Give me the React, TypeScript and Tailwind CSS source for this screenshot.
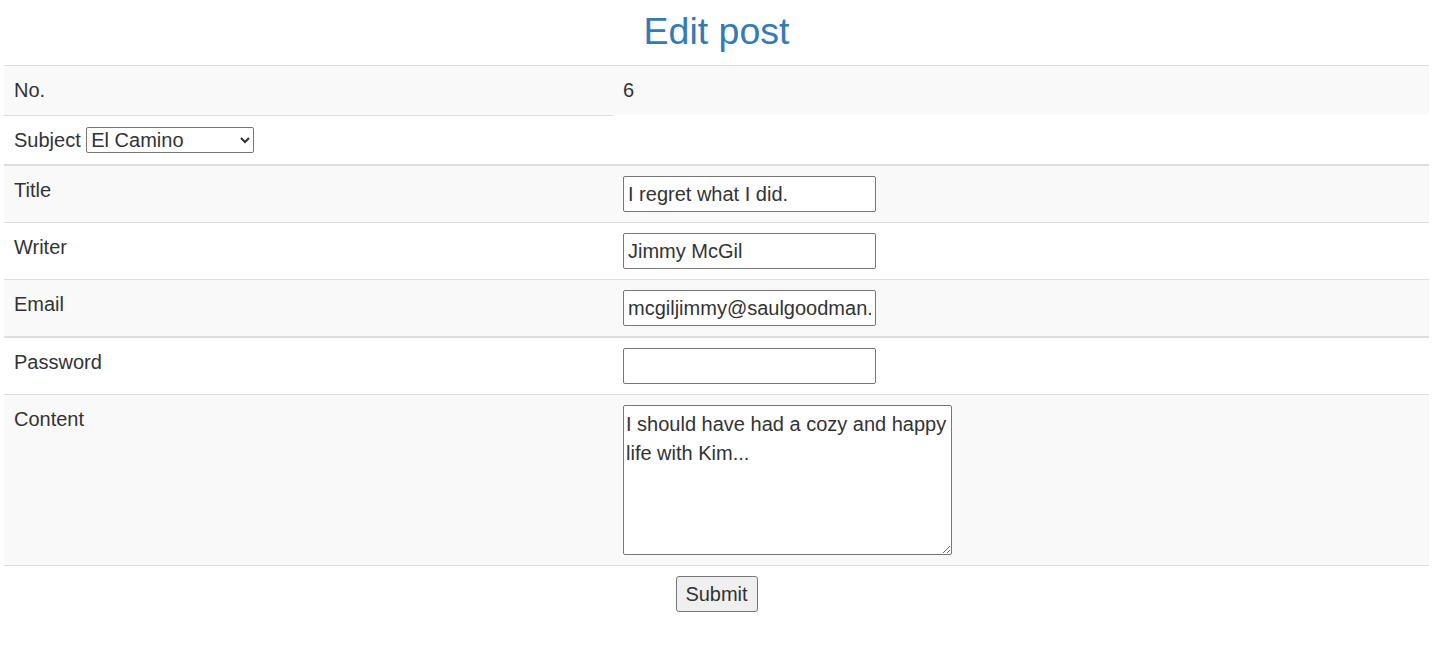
import React from 'react'

const LABEL = 'px-[10px] pt-[10px] leading-[28.57px]'
const FIELD = 'px-[10px] pt-[10px]'
const INPUT =
  'block w-[253px] h-[36px] px-[4px] border border-[#767676] rounded-[2px] bg-white text-[20px] text-[#333] outline-none'

function FieldRow({
  label,
  striped,
  thick,
  height,
  children,
}: {
  label: string
  striped?: boolean
  thick?: boolean
  height: string
  children: React.ReactNode
}) {
  return (
    <div
      className={`grid grid-cols-[609px_816px] border-[#ddd] ${thick ? 'border-t-2' : 'border-t'} ${height} ${
        striped ? 'bg-[#f9f9f9]' : 'bg-white'
      }`}
    >
      <div className={LABEL}>{label}</div>
      <div className={FIELD}>{children}</div>
    </div>
  )
}

export default function App() {
  return (
    <div
      className="min-h-[645px] bg-white text-[20px] text-[#333]"
      style={{ fontFamily: '"Liberation Sans", Arial, Helvetica, sans-serif' }}
    >
      <div className="ml-[4px] w-[1425px]">
        <h1 className="h-[65px] pt-[11px] text-center text-[37.5px] leading-[41px] text-[#337ab7] font-normal">
          Edit post
        </h1>

        <form onSubmit={(e) => e.preventDefault()}>
          {/* No. */}
          <div className="grid grid-cols-[609px_816px] border-t border-[#ddd] h-[50px] bg-[#f9f9f9]">
            <div className={LABEL}>No.</div>
            <div className={LABEL}>6</div>
          </div>

          {/* Subject: single cell row */}
          <div className="h-[49px] bg-white">
            <div className={`w-[609px] h-[49px] border-t border-[#ddd] ${LABEL}`}>
              Subject{' '}
              <select
                defaultValue="El Camino"
                className="w-[168px] h-[26px] border border-[#767676] rounded-[2px] bg-white text-[20px] leading-[normal] text-[#333] align-baseline"
              >
                <option>El Camino</option>
                <option>Breaking Bad</option>
                <option>Better Call Saul</option>
              </select>
            </div>
          </div>

          <FieldRow label="Title" striped thick height="h-[58px]">
            <input className={INPUT} defaultValue="I regret what I did." />
          </FieldRow>
          <FieldRow label="Writer" height="h-[57px]">
            <input className={INPUT} defaultValue="Jimmy McGil" />
          </FieldRow>
          <FieldRow label="Email" striped height="h-[57px]">
            <input className={INPUT} defaultValue="mcgiljimmy@saulgoodman.com" />
          </FieldRow>
          <FieldRow label="Password" thick height="h-[58px]">
            <input className={INPUT} type="password" />
          </FieldRow>
          <FieldRow label="Content" striped height="h-[171px]">
            <textarea
              className="block w-[329px] h-[150px] px-[2px] pt-[4px] pb-[2px] border border-[#767676] rounded-[2px] bg-white text-[20px] leading-[28.57px] text-[#333] outline-none"
              defaultValue="I should have had a cozy and happy life with Kim..."
            />
          </FieldRow>

          <div className="border-t border-[#ddd] pt-[10px] flex justify-center">
            <button
              type="submit"
              className="w-[82px] h-[36px] border border-[#767676] rounded-[3px] bg-[#efefef] text-[20px] text-[#333]"
            >
              Submit
            </button>
          </div>
        </form>
      </div>
    </div>
  )
}
